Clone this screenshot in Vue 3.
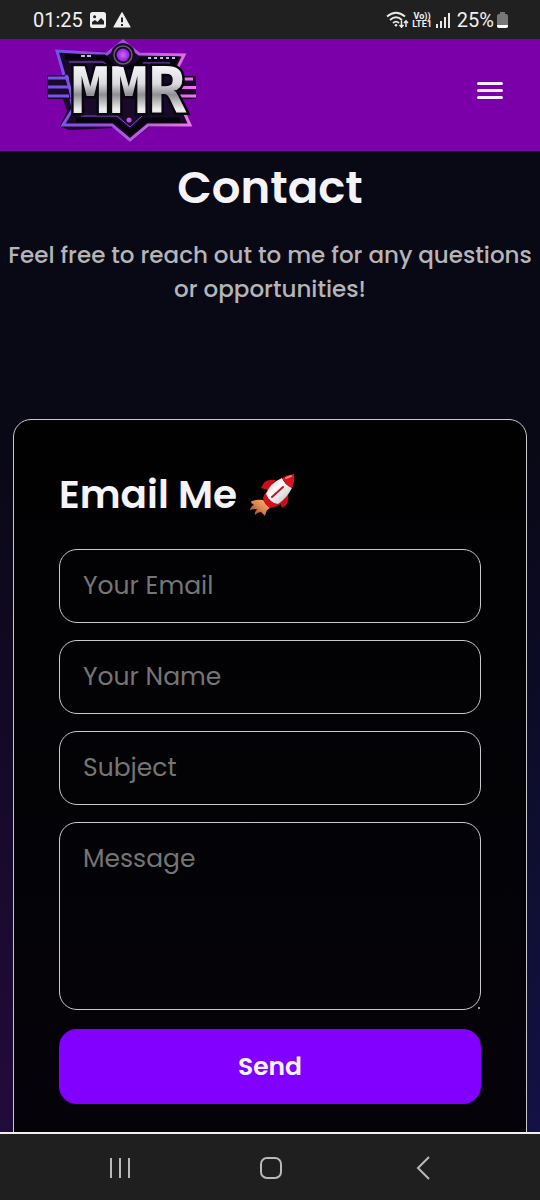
<script setup>
import { ref } from 'vue'

const email = ref('')
const name = ref('')
const subject = ref('')
const message = ref('')
</script>

<template>
  <div class="screen">
    <div class="status">
      <div class="group">
        <span>01:25</span>
        <svg class="photo" width="16" height="16" viewBox="0 0 16 16" aria-hidden="true">
          <rect width="16" height="16" rx="2.5" fill="#f0f0f0" />
          <circle cx="4.6" cy="4.8" r="1.5" fill="#212121" />
          <path d="M2 12.5V10l3-2 2.5 2L11 6l3 3v3.5z" fill="#212121" />
        </svg>
        <svg width="18" height="16" viewBox="0 0 18 16" aria-hidden="true">
          <path d="M9 .8 17 15H1z" fill="#f0f0f0" stroke="#f0f0f0" stroke-width="1.2" stroke-linejoin="round" />
          <path d="M9 5.5v4.7M9 12v2" stroke="#212121" stroke-width="2" />
        </svg>
      </div>
      <div class="group right">
        <svg width="23" height="18" viewBox="0 0 23 18" fill="none" stroke="#e8e8e8" aria-hidden="true">
          <path d="M1 5.5Q10 -2 19 5.5M4 9q6-5.5 12 0M7 12q3-2.800 6 0" stroke-width="1.8" />
          <circle cx="10" cy="14.3" r="1.3" fill="#e8e8e8" stroke="none" />
          <path d="M15.5 9.5v6.5M13.5 14l2 2.200 2-2.200M20 16V9.800M18 12l2-2.200 2 2.200" stroke-width="1.5" />
        </svg>
        <span class="volte"><b>Vo))</b><b>LTE1</b></span>
        <svg width="16" height="16" viewBox="0 0 16 16" aria-hidden="true">
          <path d="M2 12v4M6 9v7M10 5v11M14 1v15" stroke="#e8e8e8" stroke-width="2" />
        </svg>
        <span class="percent">25%</span>
        <svg width="11" height="16" viewBox="0 0 11 16" aria-hidden="true">
          <path d="M3 0h5v2h1q2 0 2 2v10q0 2-2 2H2q-2 0-2-2V4q0-2 2-2h1z" fill="#777" />
          <path d="M0 13h11v1q0 2-2 2H2q-2 0-2-2z" fill="#fff" />
        </svg>
      </div>
    </div>

    <header class="topbar">
      <a href="#" class="logo" aria-label="MMR">
        <svg width="150" height="106" viewBox="0 0 150 106">
          <defs>
            <linearGradient id="neon" gradientUnits="userSpaceOnUse" x1="0" x2="150" y1="40" y2="60">
              <stop offset="0" stop-color="#6e55e8" />
              <stop offset="0.45" stop-color="#a04be4" />
              <stop offset="1" stop-color="#f276ec" />
            </linearGradient>
            <linearGradient id="steel" x1="0" x2="0" y1="0" y2="1">
              <stop offset="0.1" stop-color="#fafafa" />
              <stop offset="0.4" stop-color="#dcdce0" />
              <stop offset="0.55" stop-color="#8f8f94" />
              <stop offset="0.75" stop-color="#efefef" />
              <stop offset="1" stop-color="#b5b5b9" />
            </linearGradient>
            <radialGradient id="orb">
              <stop offset="0" stop-color="#dd62ff" />
              <stop offset="1" stop-color="#8b20dc" />
            </radialGradient>
          </defs>
          <path d="M9 14 13 27 17 38H0V62H16L20 74 13 89 22 93 66 91 83 105 102 90 145 89 131 62H149V39H129L138 17 93 16 76 2 61 15Z" fill="#180a28" />
          <path d="M1 41H22M1 50H22M1 59H22M129 42H146M130 50.500H149M132 59H149" fill="none" stroke="url(#neon)" stroke-width="3" />
          <path d="M27 75 24 62M17 38 10 14 60 17 76 4 92 17 137 18 126 40M131 62 143 88 101 88 83 103 65 88 16 88 27 70 23 52 19 38" fill="none" stroke="url(#neon)" stroke-width="3" />
          <path d="M18 20H57L66 30H88L96 22H128L121 35M29 83H68L83 96 98 83H133" fill="none" stroke="#05030b" stroke-width="5" />
          <path d="M22 25H56L66 32M96 26H123M34 79H70L83 90 95 79" fill="none" stroke="#8350d9" stroke-width="1" />
          <path d="M34 19h4m2 0h4M101 21h3m3 0h3m3 0h3m3 0h3m3 0h3" stroke="#c9b0e3" stroke-width="2" />
          <text class="letters" x="24" y="76" fill="url(#steel)" stroke="#09070e" stroke-width="5" paint-order="stroke">MMR</text>
          <circle cx="76" cy="18" r="12" fill="#160b20" />
          <circle cx="76" cy="18" r="9" fill="none" stroke="#6b5578" stroke-width="1.5" />
          <circle cx="76" cy="18" r="6.500" fill="url(#orb)" />
          <circle cx="82" cy="83" r="2.500" fill="#c354e8" />
        </svg>
      </a>
      <button type="button" class="menu" aria-label="Menu">
        <svg width="26" height="19" viewBox="0 0 26 19" aria-hidden="true">
          <path d="M1.500 2.500h23M1.500 9.500h23M1.500 16.500h23" stroke="#f9effc" stroke-width="3" stroke-linecap="round" />
        </svg>
      </button>
    </header>

    <main class="page">
      <h1>Contact</h1>
      <p class="intro">Feel free to reach out to me for any questions or opportunities!</p>

      <form class="card" @submit.prevent>
        <h2>
          Email Me
          <svg width="46" height="44" viewBox="0 0 46 44" role="img" aria-label="Rocket">
            <defs>
              <linearGradient id="hull" x1="0" y1="0" x2="1" y2="1">
                <stop offset="0" stop-color="#aaa" />
                <stop offset="0.4" stop-color="#fff" />
                <stop offset="1" stop-color="#b5b5b5" />
              </linearGradient>
              <linearGradient id="flame" x1="1" y1="0" x2="0" y2="1">
                <stop offset="0" stop-color="#ffc070" />
                <stop offset="0.5" stop-color="#dc8350" />
                <stop offset="1" stop-color="#7d3018" />
              </linearGradient>
            </defs>
            <path d="M14 27Q8 26 3 28Q0 29 5 32Q1 34 1 37Q4 36 8 36Q5 40 6 42Q9 39 12 39Q14 41 16 43Q17 39 18 37L21 35Z" fill="url(#flame)" />
            <path d="M27 7Q15 5 12 15L19 17ZM39 21Q41 31 33 35L31 28Z" fill="#c9101a" />
            <path d="M14 25Q16 19 20 16L33 30Q28 34 21 35Q15 32 14 25Z" fill="#d3101d" />
            <path d="M17 21Q21 10 33 5Q36 12 43 15Q38 25 29 31Q21 30 17 21Z" fill="url(#hull)" />
            <path d="M33 5Q38 2 45 1Q46 8 43 15Q36 12 33 5Z" fill="#d8141f" />
            <path d="M37 5 42 3" stroke="#f57478" stroke-width="2" stroke-linecap="round" />
            <path d="M23 24 34 14" stroke="#c91521" stroke-width="2" stroke-linecap="round" />
          </svg>
        </h2>
        <input v-model="email" type="email" placeholder="Your Email" aria-label="Your Email">
        <input v-model="name" type="text" placeholder="Your Name" aria-label="Your Name">
        <input v-model="subject" type="text" placeholder="Subject" aria-label="Subject">
        <div class="area">
          <textarea v-model="message" placeholder="Message" aria-label="Message"></textarea>
          <span class="grip"></span>
        </div>
        <button type="submit" class="send">Send</button>
      </form>
    </main>

    <nav class="system" aria-label="System">
      <button type="button" aria-label="Recent apps">
        <svg width="24" height="24" viewBox="0 0 24 24"><path d="M3 2v20M12 2v20M21 2v20" /></svg>
      </button>
      <button type="button" aria-label="Home">
        <svg width="24" height="24" viewBox="0 0 24 24"><rect x="2" y="2" width="20" height="20" rx="6" /></svg>
      </button>
      <button type="button" aria-label="Back">
        <svg width="24" height="24" viewBox="0 0 24 24"><path d="M19 1 8 12l11 11" /></svg>
      </button>
    </nav>
  </div>
</template>

<style>
body {
  background: #090815;
}
</style>

<style scoped>
* {
  box-sizing: border-box;
}

.screen {
  display: flex;
  flex-direction: column;
  height: 100vh;
  font-family: Poppins, Inter, "Open Sans", sans-serif;
  color: #f3f3f8;
}

.status {
  display: flex;
  flex: none;
  align-items: center;
  justify-content: space-between;
  height: 39px;
  padding: 0 32px 0 33px;
  background: #212020;
  color: #f0f0f0;
  font: 20px/24px Roboto, sans-serif;
}

.group {
  display: flex;
  align-items: center;
  gap: 7px;
}

.group.right {
  gap: 3px;
}

.percent {
  margin-left: 3px;
}

.volte {
  display: flex;
  flex-direction: column;
  align-items: center;
  font-size: 9px;
  line-height: 8px;
}

.topbar {
  display: flex;
  flex: none;
  align-items: center;
  justify-content: space-between;
  height: 112px;
  padding: 0 37px 10px 47px;
  background: #7b00aa;
}

.logo svg,
.menu svg {
  display: block;
}

.letters {
  font: bold 64px "DejaVu Sans Mono", monospace;
}

button {
  padding: 0;
  border: 0;
  background: none;
  font: inherit;
  color: inherit;
}

.page {
  flex: 1;
  min-height: 0;
  padding: 9px 13px 0;
  overflow: auto;
  scrollbar-width: none;
  background:
    linear-gradient(to bottom, #090815 30%, transparent),
    linear-gradient(to right, #220b3d, #121244);
}

h1 {
  margin: 0;
  font-size: 45px;
  font-weight: 600;
  line-height: 56px;
  text-align: center;
}

.intro {
  margin: 22px -8px 113px;
  color: #b5b5b9;
  font-size: 23px;
  font-weight: 500;
  line-height: 34px;
  text-align: center;
}

.card {
  display: flex;
  flex-direction: column;
  gap: 17px;
  padding: 46px 45px;
  border: 1px solid #c8c8ce;
  border-radius: 18px;
  background: linear-gradient(to bottom, #010102, #050309);
}

h2 {
  display: flex;
  align-items: center;
  gap: 12px;
  margin: 0 0 8px;
  font-size: 39px;
  font-weight: 600;
  line-height: 58px;
}

input,
textarea {
  display: block;
  width: 100%;
  height: 74px;
  padding: 0 23px;
  border: 1px solid #c8c8ce;
  border-radius: 18px;
  outline: 0;
  background: transparent;
  color: #f3f3f8;
  font: 25px/36px Poppins, Inter, sans-serif;
}

textarea {
  height: 188px;
  padding-top: 18px;
  resize: none;
}

input::placeholder,
textarea::placeholder {
  color: #757575;
  opacity: 1;
}

.area {
  position: relative;
}

.grip {
  position: absolute;
  right: 1px;
  bottom: 1px;
  width: 2px;
  height: 2px;
  background: #999;
}

.send {
  height: 75px;
  margin-top: 2px;
  border-radius: 18px;
  background: #8200ff;
  font-size: 25px;
  font-weight: 600;
}

.system {
  display: flex;
  flex: none;
  align-items: center;
  justify-content: space-around;
  height: 68px;
  padding: 2px 43px 0 45px;
  border-top: 2px solid #f0f0f0;
  background: #1f1f1f;
}

.system svg {
  display: block;
  fill: none;
  stroke: #b9b9b9;
  stroke-width: 2;
}
</style>
